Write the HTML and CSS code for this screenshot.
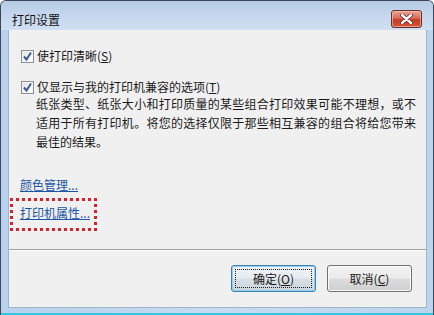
FILE: index.html
```html
<!DOCTYPE html>
<html lang="zh-CN">
<head>
<meta charset="utf-8">
<title>打印设置</title>
<link rel="stylesheet" href="styles.css">
</head>
<body>
<div class="window">
  <div class="titlebar">
    <span class="title">打印设置</span>
    <button class="close" aria-label="关闭">
      <svg width="13" height="10" viewBox="0 0 13 10">
        <path d="M2 1 L11 9 M11 1 L2 9" stroke="#5a1e16" stroke-width="3.8" stroke-linecap="round"/>
        <path d="M2 1 L11 9 M11 1 L2 9" stroke="#ffffff" stroke-width="2.4" stroke-linecap="round"/>
      </svg>
    </button>
  </div>
  <div class="client">
    <div class="check-row first">
      <span class="checkbox"><svg width="13" height="13" viewBox="0 0 13 13"><path d="M3 6.5 L5.5 9.5 L10 2.5" fill="none" stroke="#3b5b9b" stroke-width="2"/></svg></span>
      <span class="label">使打印清晰(<u>S</u>)</span>
    </div>
    <div class="check-row second">
      <span class="checkbox"><svg width="13" height="13" viewBox="0 0 13 13"><path d="M3 6.5 L5.5 9.5 L10 2.5" fill="none" stroke="#3b5b9b" stroke-width="2"/></svg></span>
      <span class="label">仅显示与我的打印机兼容的选项(<u>T</u>)</span>
    </div>
    <p class="desc">纸张类型、纸张大小和打印质量的某些组合打印效果可能不理想，或不适用于所有打印机。将您的选择仅限于那些相互兼容的组合将给您带来最佳的结果。</p>
    <a class="link first-link" href="#">颜色管理...</a>
    <div class="highlight">
      <a class="link" href="#">打印机属性...</a>
    </div>
    <div class="separator"></div>
    <div class="buttons">
      <button class="btn default"><span class="focus">确定(<u>O</u>)</span></button>
      <button class="btn">取消(<u>C</u>)</button>
    </div>
  </div>
</div>
</body>
</html>
```
FILE: styles.css
```css
* { box-sizing: border-box; }
html, body { margin: 0; padding: 0; }
body {
  width: 434px;
  height: 315px;
  background: #ffffff;
  font-family: "Noto Sans CJK SC", "Noto Sans", sans-serif;
  font-size: 12px;
  color: #1a1a1a;
  overflow: hidden;
}
.window {
  width: 434px;
  height: 315px;
  display: flex;
  flex-direction: column;
  background: linear-gradient(90deg, #b9d1ec 0%, #c8dbf0 50%, #bdd4ee 100%);
  border: 1px solid #3b4656;
  border-bottom: none;
  border-radius: 6px 6px 0 0;
  padding: 0 6px 0 6px;
  position: relative;
}
.window::after {
  content: "";
  position: absolute;
  left: 0; right: 0; bottom: 0;
  height: 2px;
  background: #36c4e0;
}
.titlebar {
  height: 29px;
  display: flex;
  align-items: flex-start;
  justify-content: space-between;
  background: linear-gradient(180deg, #b6cbe4 0%, #c6d8ee 55%, #cfe0f2 100%);
  margin: 0 -6px;
  padding: 0 11px 0 11px;
  border-radius: 5px 5px 0 0;
}
.title {
  margin-top: 10px;
  line-height: 17px;
  font-size: 12px;
  color: #141414;
}
.close {
  margin-top: 9px;
  width: 31px;
  height: 18px;
  border: 1px solid #6a2f26;
  border-radius: 3px;
  background: linear-gradient(180deg, #eaa394 0%, #d86c58 45%, #c23b24 55%, #d2583c 100%);
  box-shadow: inset 0 0 0 1px rgba(255, 210, 200, 0.55);
  display: flex;
  align-items: center;
  justify-content: center;
  padding: 0;
}
.client {
  flex: 1;
  margin-bottom: 7px;
  margin-left: 1px;
  background: #f0f0f0;
  border: 1px solid #9fb4cd;
  border-top: none;
  display: flex;
  flex-direction: column;
  align-items: flex-start;
  position: relative;
}
.check-row {
  display: flex;
  align-items: center;
  height: 14px;
  line-height: 14px;
  padding-left: 12px;
  gap: 3px;
}
.check-row.first { margin-top: 19px; }
.check-row.second { margin-top: 17px; }
.checkbox {
  width: 13px;
  height: 13px;
  border: 1px solid #8e8f8f;
  background: linear-gradient(135deg, #dcdcdc 0%, #ffffff 80%);
  box-shadow: inset 0 0 0 1px #f4f4f4;
  display: flex;
  align-items: center;
  justify-content: center;
}
.checkbox svg { margin: -1px; }
.label { white-space: nowrap; }
.desc {
  margin: 0;
  padding-left: 27px;
  padding-right: 10px;
  line-height: 19px;
  width: 100%;
  text-align: justify;
}
.link {
  color: #1a55a3;
  text-decoration: underline;
  line-height: 16px;
  white-space: nowrap;
}
.first-link {
  margin-top: 26px;
  margin-left: 11px;
}
.highlight {
  margin-top: 5px;
  margin-left: 1px;
  border: 3px dotted #d3222e;
  padding: 4px 4px 7px 7px;
}
.highlight .link { display: block; }
.separator {
  align-self: stretch;
  margin-top: 18px;
  height: 2px;
  border-top: 1px solid #a0a0a0;
  border-bottom: 1px solid #ffffff;
}
.buttons {
  align-self: stretch;
  display: flex;
  justify-content: flex-end;
  gap: 11px;
  margin-top: 14px;
  padding-right: 14px;
}
.btn {
  width: 85px;
  height: 27px;
  font-family: inherit;
  font-size: 12px;
  color: #1a1a1a;
  border: 1px solid #707070;
  border-radius: 3px;
  background: linear-gradient(180deg, #f2f2f2 0%, #ebebeb 48%, #dddddd 52%, #cfcfcf 100%);
  box-shadow: inset 0 0 0 1px #fcfcfc;
  padding: 0;
  display: flex;
  align-items: center;
  justify-content: center;
}
.btn.default {
  border-color: #3c7fb1;
  background: linear-gradient(180deg, #f0f3f6 0%, #e6ebef 48%, #d8dfe5 52%, #cdd5dc 100%);
  box-shadow: inset 0 0 0 1px #8fd2f2;
}
.btn .focus {
  display: flex;
  align-items: center;
  justify-content: center;
  width: 77px;
  height: 19px;
  border: 1px dotted #202020;
}
```
